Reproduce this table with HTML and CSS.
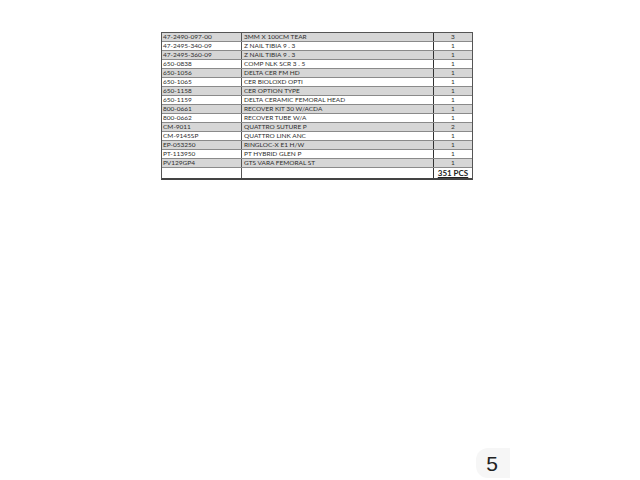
FILE: index.html
```html
<!DOCTYPE html>
<html>
<head>
<meta charset="utf-8">
<link rel="stylesheet" href="styles.css">
</head>
<body>
<div class="page">
  <div class="sheet">
    <div class="row alt"><div class="c1">47-2490-097-00</div><div class="c2">3MM X 100CM TEAR</div><div class="c3">3</div></div>
    <div class="row"><div class="c1">47-2495-340-09</div><div class="c2">Z NAIL TIBIA 9 . 3</div><div class="c3">1</div></div>
    <div class="row alt"><div class="c1">47-2495-360-09</div><div class="c2">Z NAIL TIBIA 9 . 3</div><div class="c3">1</div></div>
    <div class="row"><div class="c1">650-0838</div><div class="c2">COMP NLK SCR 3 . 5</div><div class="c3">1</div></div>
    <div class="row alt"><div class="c1">650-1056</div><div class="c2">DELTA CER FM HD</div><div class="c3">1</div></div>
    <div class="row"><div class="c1">650-1065</div><div class="c2">CER BIOLOXD OPTI</div><div class="c3">1</div></div>
    <div class="row alt"><div class="c1">650-1158</div><div class="c2">CER OPTION TYPE</div><div class="c3">1</div></div>
    <div class="row"><div class="c1">650-1159</div><div class="c2">DELTA CERAMIC FEMORAL HEAD</div><div class="c3">1</div></div>
    <div class="row alt"><div class="c1">800-0661</div><div class="c2">RECOVER KIT 30 W/ACDA</div><div class="c3">1</div></div>
    <div class="row"><div class="c1">800-0662</div><div class="c2">RECOVER TUBE W/A</div><div class="c3">1</div></div>
    <div class="row alt"><div class="c1">CM-9011</div><div class="c2">QUATTRO SUTURE P</div><div class="c3">2</div></div>
    <div class="row"><div class="c1">CM-9145SP</div><div class="c2">QUATTRO LINK ANC</div><div class="c3">1</div></div>
    <div class="row alt"><div class="c1">EP-053250</div><div class="c2">RINGLOC-X E1 H/W</div><div class="c3">1</div></div>
    <div class="row"><div class="c1">PT-113950</div><div class="c2">PT HYBRID GLEN P</div><div class="c3">1</div></div>
    <div class="row alt"><div class="c1">PV129GP4</div><div class="c2">GTS VARA FEMORAL ST</div><div class="c3">1</div></div>
    <div class="row total"><div class="c1"></div><div class="c2"></div><div class="c3"><span class="sum">351 PCS</span></div></div>
  </div>
  <div class="footer"><span class="pagenum">5</span></div>
</div>
</body>
</html>
```
FILE: styles.css
```css
html, body {
  margin: 0;
  padding: 0;
  background: #ffffff;
}
.page {
  width: 640px;
  height: 480px;
  display: flex;
  flex-direction: column;
  overflow: hidden;
}
.sheet {
  margin: 32px 0 0 161px;
  width: 312px;
  box-sizing: border-box;
  border: 1px solid #555;
  border-bottom: 2px solid #444;
  font-family: Lato, "Open Sans", "Liberation Sans", sans-serif;
  font-size: 6.5px;
  color: #2e2e2e;
}
.row {
  display: grid;
  grid-template-columns: 80px 192px 1fr;
  height: 9px;
  box-sizing: border-box;
  border-bottom: 1px solid #8a8a8a;
  background: #ffffff;
}
.row.alt {
  background: #d6d6d6;
}
.row > div {
  line-height: 8px;
  white-space: nowrap;
  overflow: hidden;
}
.c1 {
  padding-left: 1px;
  border-right: 1px solid #555;
}
.c2 {
  padding-left: 2px;
  border-right: 1px solid #333;
}
.c3 {
  text-align: center;
}
.row.total {
  height: 10px;
  border-bottom: none;
}
.row.total > div {
  line-height: 10px;
}
.sum {
  font-weight: bold;
  font-size: 8px;
  text-decoration: underline;
  color: #222;
}
.footer {
  margin-top: auto;
  margin-bottom: 2px;
  margin-left: 476px;
  width: 34px;
  height: 30px;
  background: #f6f6f6;
  border-radius: 12px 0 0 12px;
  display: flex;
  justify-content: center;
  align-items: center;
}
.pagenum {
  font-family: "Liberation Sans", Arial, sans-serif;
  font-size: 21px;
  line-height: 1;
  color: #222;
  margin-left: -2px;
}
```
